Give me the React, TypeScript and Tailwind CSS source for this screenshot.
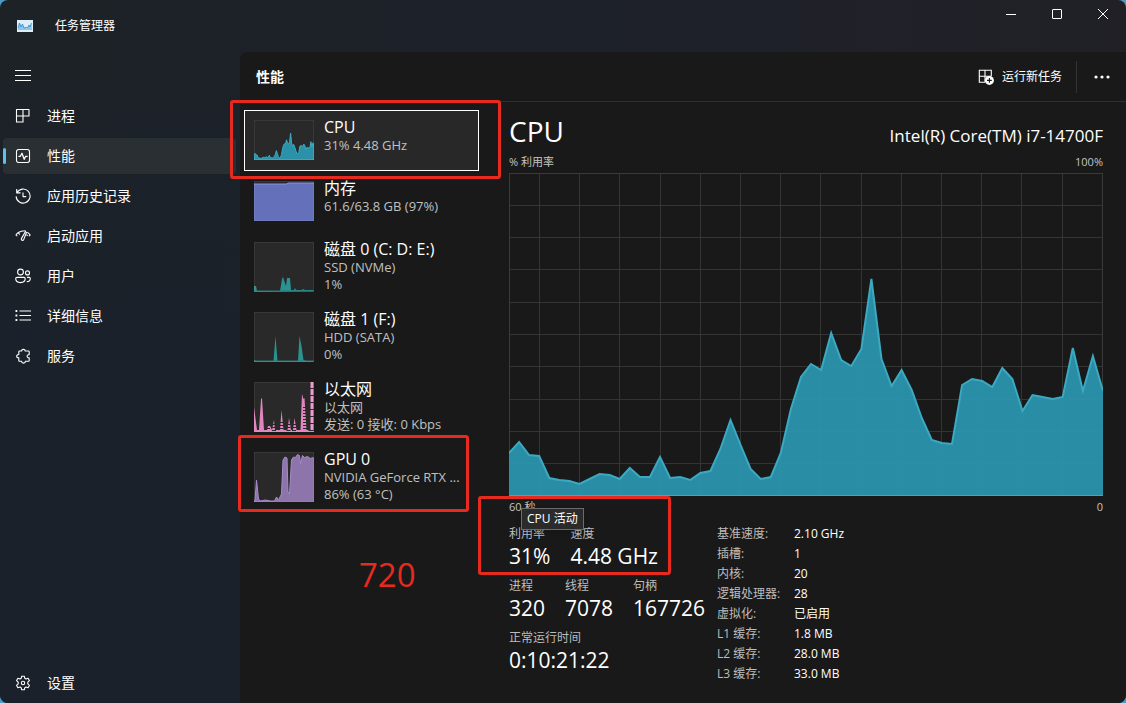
import React, { useState } from 'react';

const USAGE = [
  43, 54, 41, 40, 18, 16, 15, 12, 17, 22, 21, 17, 28, 19, 19, 39, 18, 19, 16, 23,
  25, 47, 76, 51, 27, 17, 19, 43, 87, 119, 132, 126, 163, 136, 130, 147, 217, 137, 110, 126,
  106, 78, 56, 53, 52, 111, 117, 115, 109, 128, 117, 85, 101, 99, 97, 99, 148, 105, 140, 105,
];

// Builds the polyline for the usage samples, oldest first
const usageLine = (width: number, height: number) =>
  USAGE.map((v, i) => `${((i * width) / (USAGE.length - 1)).toFixed(1)},${(height - (v * height) / 323).toFixed(1)}`).join(' ');

const icons: Record<string, React.ReactNode> = {
  processes: (
    <path d="M1.5 1.5h12.500v6.500H8v6H1.500zM8 1.500V8M1.500 8H8" />
  ),
  performance: (
    <>
      <rect x="1.5" y="1.5" width="13" height="13" rx="2.2" />
      <path d="M3.4 8.3h1.9l1.7-3 2.2 6 1.5-3h2" strokeWidth="1.3" />
    </>
  ),
  history: (
    <>
      <path d="M2 4.6A7 7 0 1 1 1.1 8.4M1.7 1v3.9h3.9" />
      <path d="M8 4.4v4.2h3.2" />
    </>
  ),
  startup: (
    <>
      <path d="M.8 7.2A8.2 8.2 0 0 1 7 3.2M12.3 4.2a8 8 0 0 1 3 3M.8 7.2l1.6.8M15.3 7.2l-1.5.8M3.4 5l1.4 1.6M6 3.3l4.600-.6" />
      <path d="M10.8 3 6.4 10.600a1.3 1.3 0 0 0 2.2 1.3L11.600 4M11.600 6.600l1 1.400" />
    </>
  ),
  users: (
    <>
      <circle cx="5.5" cy="4" r="2.9" />
      <circle cx="12.5" cy="4.9" r="2" />
      <path d="M2 9.4h7c.8 0 1.2.5 1.2 1.2 0 2.3-1.8 4-4.7 4S.7 12.9.7 10.6C.7 9.9 1.2 9.4 2 9.4z" />
      <path d="M12 9.4h2.2c.7 0 1.1.4 1.1 1.1 0 2-1.3 3.1-3.5 3.1" />
    </>
  ),
  details: (
    <>
      <path d="M4.5 3H16M4.5 7.5H16M4.5 12H16" />
      <path d="M.5 3h1.8M.5 7.5h1.8M.5 12h1.8" strokeWidth="1.8" />
    </>
  ),
  services: (
    <path d="M4.600 3h2c0-2.200 3.600-2.200 3.600 0h3.200c.5 0 .8.300.8.800v2.800c-2.800-.2-2.800 3.400 0 3.200v2.700c0 .5-.3.800-.8.800h-3c0 2.400-3.800 2.400-3.800 0H4.600c-.5 0-.8-.3-.8-.8V9.800C1 9.800 1 6.500 3.800 6.500V3.800c0-.5.3-.8.8-.8z" />
  ),
  settings: (
    <>
      <circle cx="8" cy="8" r="1.7" />
      <path d="M6.7 1.2h2.6l.5 2.1 1.2.7 2.1-.7 1.3 2.3-1.6 1.5v1.8l1.6 1.5-1.3 2.3-2.1-.7-1.2.7-.5 2.1H6.7l-.5-2.1-1.2-.7-2.1.7-1.3-2.3 1.6-1.5V7.1L1.6 5.6l1.3-2.3L5 4l1.2-.7z" />
    </>
  ),
};

const Icon: React.FC<{ name: string }> = ({ name }) => (
  <svg viewBox="0 0 16 16" className="size-4 shrink-0" fill="none" stroke="currentColor" strokeWidth="1.1" strokeLinejoin="round" aria-hidden="true">
    {icons[name]}
  </svg>
);

const navItems = [
  { id: 'processes', label: '进程' },
  { id: 'performance', label: '性能' },
  { id: 'history', label: '应用历史记录' },
  { id: 'startup', label: '启动应用' },
  { id: 'users', label: '用户' },
  { id: 'details', label: '详细信息' },
  { id: 'services', label: '服务' },
];

const NavButton: React.FC<{ id: string; label: string; active: boolean; onClick: () => void }> = ({ id, label, active, onClick }) => (
  <button
    onClick={onClick}
    className={`relative flex h-9 items-center gap-4 rounded px-3 text-left text-sm ${active ? 'bg-[#2a2f34]' : 'hover:bg-white/5'}`}
  >
    {active && <span className="absolute left-0 h-4 w-[3px] rounded-full bg-[#5ac3e8]" />}
    <Icon name={id} />
    {label}
  </button>
);

const thumbs: Record<string, React.ReactNode> = {
  cpu: (
    <polygon points={`0,40 ${usageLine(60, 40)} 60,40`} fill="#2a91a9" stroke="#35aec6" />
  ),
  memory: (
    <>
      <path d="M0 3h33l1-1h26v38H0z" fill="#6470b9" />
      <path d="M0 3h33l1-1h26" fill="none" stroke="#8d93e6" />
    </>
  ),
  disk0: (
    <>
      <path d="M0 50v-6h2l1 5h23l2-12 1-2 3 9 1-8h3l1 12h3l1-2 1 2h6l1-1 2 1h8v1z" fill="#2b9290" />
      <path d="M0 49h60" stroke="#2b7a79" />
    </>
  ),
  disk1: (
    <>
      <path d="M0 50v-2l2 1h17.5l2-25 2 25h20.5l1.5-25 2 10 2 14 3 1h6.500v1z" fill="#2b9290" />
      <path d="M0 49h60" stroke="#2b7a79" />
    </>
  ),
  ethernet: (
    <>
      <path d="M0 50V25l3 23h2l2-31 1-1 2 32h3l1-4h2l2 4 2-10 1 10h5l1.5-20 2 20h4l1.5-12 2 12h2l1.5-12 2 12h4l1.5-36 1.5 5 1-1 2 32h2V50z" fill="#e085bd" />
      <path d="M58 0v50" stroke="#ef9ace" strokeWidth="3" strokeDasharray="6 1" />
      <path d="M14 40v9M20 42v7M27.500 40v9M34.500 42v7M40 42v7M51 25v24" stroke="#292929" strokeWidth="4" strokeDasharray="1 2" />
      <path d="M0 49.5h60" stroke="#e085bd" />
    </>
  ),
  gpu: (
    <path d="M0 50l1-2 1.5-20L4.5 47l2 2 5-1 5 1h4l2-4 2 3 3-6 1.5-34 2-3 2 1 1 34 1.5 2 2-34 2-3 2 .5 2-3 2 1 1 8 2-8 2 2 3-1 3 2 2-1 2 1v45z" fill="#8d74ab" stroke="#a68bcb" />
  ),
};

interface Device {
  id: string;
  name: string;
  lines: string[];
}

const devices: Device[] = [
  { id: 'cpu', name: 'CPU', lines: ['31% 4.48 GHz'] },
  { id: 'memory', name: '内存', lines: ['61.6/63.8 GB (97%)'] },
  { id: 'disk0', name: '磁盘 0 (C: D: E:)', lines: ['SSD (NVMe)', '1%'] },
  { id: 'disk1', name: '磁盘 1 (F:)', lines: ['HDD (SATA)', '0%'] },
  { id: 'ethernet', name: '以太网', lines: ['以太网', '发送: 0 接收: 0 Kbps'] },
  { id: 'gpu', name: 'GPU 0', lines: ['NVIDIA GeForce RTX ...', '86% (63 °C)'] },
];

const Mark: React.FC<{ className: string }> = ({ className }) => (
  <span className={`pointer-events-none absolute z-10 rounded-[3px] border-3 border-[#e62a20] ${className}`} />
);

const DeviceButton: React.FC<{ device: Device; active: boolean; onClick: () => void }> = ({ device, active, onClick }) => {
  const tall = device.lines.length > 1;
  return (
    <div className="relative">
      <button
        onClick={onClick}
        className={`flex w-full items-start border px-[9px] pt-[6px] text-left ${tall ? 'h-[70px]' : 'h-[61px]'} ${active ? 'border-white bg-[#282828]' : 'border-transparent hover:bg-white/5'}`}
      >
        <svg
          viewBox={tall ? '0 0 60 50' : '0 0 60 40'}
          className={`mt-[3px] w-15 shrink-0 bg-[#292929] ${tall ? 'h-[50px]' : 'h-10'}`}
          preserveAspectRatio="none"
          aria-hidden="true"
        >
          {thumbs[device.id]}
          <rect x=".5" y=".5" width="59" height={tall ? 49 : 39} fill="none" stroke="#fff" strokeOpacity=".07" />
        </svg>
        <span className="flex min-w-0 flex-col pl-[10px] whitespace-nowrap">
          <span className="text-base leading-5 text-white">{device.name}</span>
          {device.lines.map((line) => (
            <span key={line} className="text-[13px] leading-[17px] text-[#c0c0c0]">{line}</span>
          ))}
        </span>
      </button>
      {device.id === 'cpu' && <Mark className="-top-[10px] -right-[22px] -bottom-2 -left-[14px]" />}
      {device.id === 'gpu' && <Mark className="-top-[7px] right-[10px] bottom-0 -left-[6px]" />}
    </div>
  );
};

const UsageChart: React.FC = () => (
  <svg viewBox="0 0 594 323" className="block h-[323px] w-full" preserveAspectRatio="none" role="img" aria-label="CPU 利用率">
    <g stroke="#343434" shapeRendering="crispEdges">
      {Array.from({ length: 9 }, (_, i) => (
        <line key={i} x1="0" x2="594" y1={(i + 1) * 32.3} y2={(i + 1) * 32.3} />
      ))}
      {Array.from({ length: 14 }, (_, i) => (
        <line key={i} x1={30.5 + i * 40.2} x2={30.5 + i * 40.2} y1="0" y2="323" />
      ))}
    </g>
    <rect x=".5" y=".5" width="593" height="322" fill="none" stroke="#3a3a3a" />
    <polygon points={`0,323 ${usageLine(594, 323)} 594,323`} fill="#2b95af" fillOpacity=".94" />
    <polyline points={usageLine(594, 323)} fill="none" stroke="#3ba9c1" strokeWidth="2" />
    <path d="M0 322.5h594" stroke="#3ba9c1" />
  </svg>
);

const Stat: React.FC<{ label: string; value: string }> = ({ label, value }) => (
  <div>
    <dt className="text-xs leading-5 text-[#bdbdbd]">{label}</dt>
    <dd className="text-[21px] leading-6 text-white">{value}</dd>
  </div>
);

const specs = [
  ['基准速度:', '2.10 GHz'],
  ['插槽:', '1'],
  ['内核:', '20'],
  ['逻辑处理器:', '28'],
  ['虚拟化:', '已启用'],
  ['L1 缓存:', '1.8 MB'],
  ['L2 缓存:', '28.0 MB'],
  ['L3 缓存:', '33.0 MB'],
];

const TitleBar: React.FC = () => (
  <header className="flex h-13 items-start justify-between">
    <div className="flex items-center gap-[22px] pt-4 pl-[17px]">
      <svg viewBox="0 0 16 12" className="h-3 w-4" aria-hidden="true">
        <rect width="16" height="12" fill="#dceefa" />
        <path d="M1 10V8l1.5-5L4 7l1.500-3 1.500 4 2-1v2l1.500-1L12 5l1 2 1.500-4 .5 7z" fill="#8cc5eb" />
        <path d="M1 8l1.500-5L4 7l1.500-3L7 8l2-.5 1.500.5L12 5l1 2 1.500-4" fill="none" stroke="#2f8ac4" strokeWidth=".8" />
      </svg>
      <span className="text-xs leading-5 text-white">任务管理器</span>
    </div>
    <div className="flex text-white">
      <button className="flex h-7 w-[46px] items-center justify-center hover:bg-white/10" aria-label="最小化">
        <svg viewBox="0 0 10 10" className="size-[10px]" stroke="currentColor"><path d="M0 5.5h10" /></svg>
      </button>
      <button className="flex h-7 w-[46px] items-center justify-center hover:bg-white/10" aria-label="最大化">
        <svg viewBox="0 0 10 10" className="size-[10px]" fill="none" stroke="currentColor"><rect x=".5" y=".5" width="9" height="9" rx=".5" /></svg>
      </button>
      <button className="flex h-7 w-[46px] items-center justify-center hover:bg-red-600" aria-label="关闭">
        <svg viewBox="0 0 10 10" className="size-[10px]" stroke="currentColor"><path d="M0 0l10 10M10 0L0 10" /></svg>
      </button>
    </div>
  </header>
);

export default function App() {
  const [page, setPage] = useState('performance');
  const [device, setDevice] = useState('cpu');

  return (
    <div className="min-h-screen bg-[#4b9cc4] font-['Open_Sans','Noto_Sans_CJK_SC',sans-serif]">
      <div className="flex min-h-screen flex-col rounded-lg bg-linear-to-r from-[#1c2226] via-[#1d212a] to-[#212027] text-white">
        <TitleBar />
        <div className="flex flex-1">
          {/* Navigation */}
          <nav className="flex w-60 shrink-0 flex-col gap-1 rounded-bl-lg bg-linear-to-b from-transparent to-[#1b212b] to-50% pt-[6px] pr-1 pb-[2px] pl-[3px]">
            <button className="flex h-9 w-10 items-center px-3" aria-label="打开导航">
              <svg viewBox="0 0 16 16" className="size-4" stroke="currentColor" aria-hidden="true">
                <path d="M0 2.5h16M0 7.5h16M0 12.5h16" />
              </svg>
            </button>
            {navItems.map((item) => (
              <NavButton key={item.id} {...item} active={page === item.id} onClick={() => setPage(item.id)} />
            ))}
            <div className="flex-1" />
            <NavButton id="settings" label="设置" active={page === 'settings'} onClick={() => setPage('settings')} />
          </nav>

          <main className="flex min-w-0 flex-1 flex-col rounded-tl-lg rounded-br-lg bg-[#191919]">
            <div className="flex h-[50px] items-center border-b border-[#2e2e2e] pl-4">
              <h1 className="flex-1 text-sm font-bold">性能</h1>
              <button className="flex items-center gap-2 pr-[14px] text-xs leading-5">
                <svg viewBox="0 0 16 16" className="size-4" fill="none" stroke="currentColor" strokeWidth="1.1" aria-hidden="true">
                  <path d="M7 13.3H1.3V1.3h12v5.8M7 1.3v12M1.3 7.2h12" />
                  <circle cx="11.4" cy="11.4" r="4.5" fill="#fff" stroke="none" />
                  <path d="M11.4 9v4.8M9 11.4h4.8" stroke="#191919" />
                </svg>
                运行新任务
              </button>
              <span className="h-8 w-px bg-[#333]" />
              <button className="flex h-8 w-[49px] items-center justify-center" aria-label="更多">
                <svg viewBox="0 0 16 4" className="h-1 w-4" fill="currentColor"><circle cx="2" cy="2" r="1.6" /><circle cx="8" cy="2" r="1.6" /><circle cx="14" cy="2" r="1.6" /></svg>
              </button>
            </div>

            <div className="flex flex-1">
              <div className="ml-1 w-[235px] shrink-0 pt-2">
                {devices.map((d) => (
                  <DeviceButton key={d.id} device={d} active={device === d.id} onClick={() => setDevice(d.id)} />
                ))}
                <p className="pt-10 pl-[115px] text-[33px] leading-[46px] text-[#e62a20]">720</p>
              </div>

              {/* CPU details */}
              <section className="mr-[23px] ml-[30px] min-w-0 flex-1 pt-[9px]">
                <div className="flex items-baseline justify-between">
                  <h2 className="text-[28px] leading-10">CPU</h2>
                  <span className="text-[17px] leading-6">Intel(R) Core(TM) i7-14700F</span>
                </div>
                <div className="flex justify-between text-[11px] leading-[22px] text-[#c4c4c4]">
                  <span>% 利用率</span>
                  <span>100%</span>
                </div>
                <UsageChart />
                <div className="flex justify-between text-[11px] leading-[22px] text-[#c4c4c4]">
                  <span>60 秒</span>
                  <span>0</span>
                </div>

                <div className="mt-[6px] flex">
                  <div className="flex w-52 shrink-0 flex-col gap-2">
                    <dl className="relative flex gap-5">
                      <Stat label="利用率" value="31%" />
                      <Stat label="速度" value="4.48 GHz" />
                      <Mark className="-top-7 right-[46px] -bottom-[7px] -left-[31px]" />
                      <div role="tooltip" className="absolute -top-4 left-3 border border-[#6b6b6b] bg-[#2b2b2b] px-[5px] text-xs leading-5 whitespace-nowrap text-white shadow-md">
                        CPU 活动
                      </div>
                    </dl>
                    <dl className="flex gap-5">
                      <Stat label="进程" value="320" />
                      <Stat label="线程" value="7078" />
                      <Stat label="句柄" value="167726" />
                    </dl>
                    <dl>
                      <Stat label="正常运行时间" value="0:10:21:22" />
                    </dl>
                  </div>
                  <table className="self-start text-left text-xs leading-5">
                    <tbody>
                      {specs.map(([label, value]) => (
                        <tr key={label}>
                          <th scope="row" className="w-[77px] p-0 font-normal whitespace-nowrap text-[#bdbdbd]">{label}</th>
                          <td className="p-0 whitespace-nowrap">{value}</td>
                        </tr>
                      ))}
                    </tbody>
                  </table>
                </div>
              </section>
            </div>
          </main>
        </div>
      </div>
    </div>
  );
}
